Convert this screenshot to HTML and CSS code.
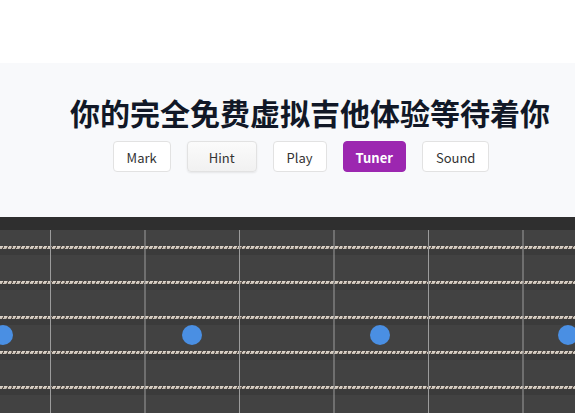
FILE: index.html
```html
<!DOCTYPE html>
<html lang="zh">
<head>
<meta charset="utf-8">
<title>虚拟吉他</title>
<link rel="stylesheet" href="styles.css">
</head>
<body>
<div class="top-space"></div>
<section class="hero">
  <h1 class="title">你的完全免费虚拟吉他体验等待着你</h1>
  <div class="toolbar">
    <button class="btn">Mark</button>
    <button class="btn btn-hint">Hint</button>
    <button class="btn">Play</button>
    <button class="btn btn-active">Tuner</button>
    <button class="btn">Sound</button>
  </div>
</section>
<section class="board">
  <div class="nut-bar"></div>
  <div class="fretboard">
    <div class="row"><div class="string"></div><div class="shade"></div></div>
    <div class="row"><div class="string"></div><div class="shade"></div></div>
    <div class="row"><div class="string"></div><div class="shade"></div></div>
    <div class="row"><div class="string"></div><div class="shade"></div></div>
    <div class="row"><div class="string"></div><div class="shade"></div></div>
    <div class="row"><div class="string"></div><div class="shade"></div></div>
    <div class="frets"></div>
    <span class="dot" style="left:-7px"></span>
    <span class="dot" style="left:182px"></span>
    <span class="dot" style="left:370px"></span>
    <span class="dot" style="left:558px"></span>
  </div>
</section>
</body>
</html>
```

FILE: styles.css
```css
html, body {
  margin: 0;
  padding: 0;
  overflow: hidden;
  background: #ffffff;
  font-family: "Noto Sans CJK SC", "Noto Sans", sans-serif;
}

.top-space {
  height: 63px;
  background: #ffffff;
}

.hero {
  background: #f8f9fb;
  padding: 28px 0 45px;
  display: flex;
  flex-direction: column;
  align-items: center;
}

.title {
  margin: 0 0 0 45px;
  font-size: 30px;
  line-height: 43px;
  font-weight: 700;
  color: #111827;
  white-space: nowrap;
}

.toolbar {
  display: flex;
  gap: 16px;
  margin: 7px 0 0 27px;
}

.btn {
  height: 31px;
  padding: 2px 13px 0;
  border: 1px solid #e2e2e2;
  border-radius: 4px;
  background: #ffffff;
  color: #333333;
  font-family: "Noto Sans CJK SC", "Noto Sans", sans-serif;
  font-size: 13px;
  line-height: 1;
  display: flex;
  align-items: center;
  justify-content: center;
}

.btn-hint {
  padding-left: 21px;
  padding-right: 21px;
  background: linear-gradient(#fbfbfb, #f1f1f1);
  box-shadow: 0 1px 2px rgba(0, 0, 0, 0.08);
}

.btn-active {
  padding-left: 12px;
  padding-right: 12px;
  background: #9c27b0;
  border-color: #9c27b0;
  color: #ffffff;
  font-weight: 700;
}

.nut-bar {
  height: 13px;
  background: #2f2f2f;
}

.fretboard {
  position: relative;
  background: #424242;
  height: 183px;
  overflow: hidden;
}

.row {
  height: 35px;
  padding-top: 16px;
  box-sizing: border-box;
}

.string {
  height: 3px;
  background:
    linear-gradient(to bottom, rgba(255, 255, 255, 0.06), rgba(0, 0, 0, 0.12)),
    repeating-linear-gradient(115deg, #ddd4c9 0 2.6px, #9a8f85 2.6px 3.1px, #554c45 3.1px 4px);
}

.shade {
  height: 6px;
  background: rgba(0, 0, 0, 0.1);
}

.frets {
  position: absolute;
  inset: 0;
  background-image: linear-gradient(to right, #9c9c9c 0 1px, transparent 1px);
  background-size: 94.5px 100%;
  background-position: 50px 0;
  pointer-events: none;
}

.dot {
  position: absolute;
  top: 95px;
  width: 20px;
  height: 20px;
  border-radius: 50%;
  background: #4a8fe3;
}
```
